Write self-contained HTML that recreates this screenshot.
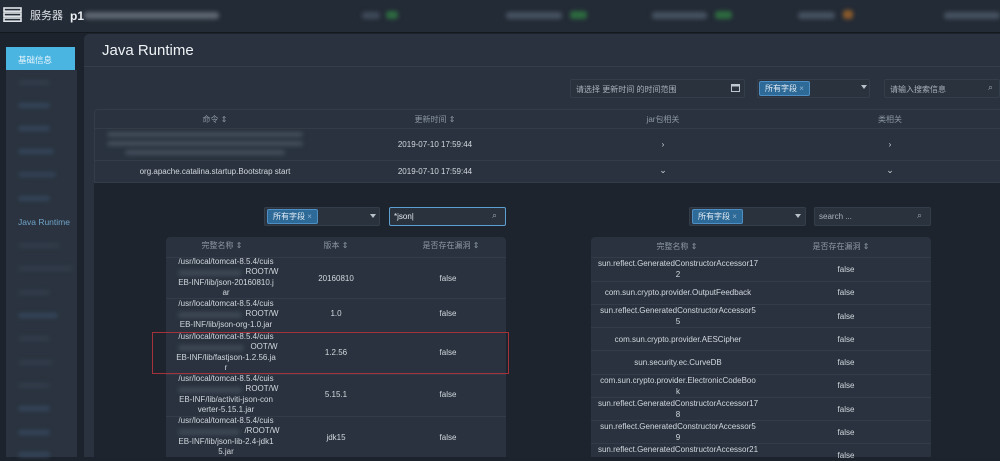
<!DOCTYPE html>
<html><head><meta charset="utf-8"><style>
*{box-sizing:border-box;margin:0;padding:0}
body{width:1000px;height:457px;overflow:hidden;background:#1d232c;font-family:"Liberation Sans","Noto Sans CJK SC",sans-serif;color:#d0d6de;position:relative}
.abs{position:absolute}
.blur{position:absolute;filter:blur(2px);border-radius:3px}
.c{position:absolute;text-align:center;font-size:8px;line-height:11px;color:#d3d8df}
.lt .c{line-height:10.3px}
.tag{position:absolute;background:#2e6a98;border:1px solid #4d8fc4;border-radius:2px;color:#e6eef5;font-size:8px;line-height:13px;padding:0 5px}
.inp{position:absolute;background:#2a323e;border:1px solid #343d4a;border-radius:2px;font-size:8px;color:#a9b2bd}
.hd{font-size:8px;color:#8e98a4}
.row{position:absolute;left:0;right:0;border-top:1px solid #333c48}
</style></head><body>
<!-- top bar -->
<div class="abs" style="left:0;top:0;width:1000px;height:33px;background:#232b36;border-bottom:1px solid #141920"></div>
<svg class="abs" style="left:3px;top:7px" width="19" height="15"><g fill="none" stroke="#e0e4e8" stroke-width="1.6"><rect x="1" y="1" width="17" height="3.2"/><rect x="1" y="6" width="17" height="3.2"/><rect x="1" y="11" width="17" height="3.2"/></g></svg>
<div class="abs" style="left:30px;top:9px;font-size:11px;line-height:14px;color:#dfe3e8">服务器</div>
<div class="abs" style="left:70px;top:9px;font-size:12px;line-height:14px;color:#eef1f4;font-weight:bold">p1</div>
<div class="blur" style="left:84px;top:12px;width:135px;height:7px;background:#5d6671"></div>
<div class="blur" style="left:362px;top:12px;width:18px;height:7px;background:#3e4958"></div>
<div class="blur" style="left:386px;top:11px;width:12px;height:8px;background:#2d6a3f"></div>
<div class="blur" style="left:506px;top:12px;width:56px;height:7px;background:#465160"></div>
<div class="blur" style="left:570px;top:11px;width:17px;height:8px;background:#2d6a3f"></div>
<div class="blur" style="left:652px;top:12px;width:55px;height:7px;background:#465160"></div>
<div class="blur" style="left:715px;top:11px;width:17px;height:8px;background:#2d6a3f"></div>
<div class="blur" style="left:798px;top:12px;width:37px;height:7px;background:#465160"></div>
<div class="blur" style="left:843px;top:10px;width:10px;height:9px;background:#8a5a2a"></div>
<div class="blur" style="left:944px;top:12px;width:56px;height:7px;background:#465160"></div>
<!-- sidebar -->
<div class="abs" style="left:6px;top:70px;width:71px;height:387px;background:#2a333f"></div>
<div class="abs" style="left:6px;top:47px;width:69px;height:23px;background:#4bb5e2;font-size:8.5px;color:#eaf6fc;padding:7px 0 0 12px">基础信息</div>
<div class="blur" style="left:18px;top:80px;width:32px;height:5px;background:#323c4a"></div>
<div class="blur" style="left:18px;top:103px;width:32px;height:5px;background:#34455a"></div>
<div class="blur" style="left:18px;top:126px;width:32px;height:5px;background:#34455a"></div>
<div class="blur" style="left:18px;top:149px;width:36px;height:5px;background:#34455a"></div>
<div class="blur" style="left:18px;top:172px;width:38px;height:5px;background:#324256"></div>
<div class="blur" style="left:18px;top:196px;width:32px;height:5px;background:#34455a"></div>
<div class="abs" style="left:18px;top:217px;font-size:8.5px;color:#6fa3c8">Java Runtime</div>
<div class="blur" style="left:18px;top:243px;width:42px;height:5px;background:#323c4a"></div>
<div class="blur" style="left:18px;top:266px;width:55px;height:5px;background:#323c4a"></div>
<div class="blur" style="left:18px;top:290px;width:32px;height:5px;background:#323c4a"></div>
<div class="blur" style="left:18px;top:313px;width:40px;height:5px;background:#34455a"></div>
<div class="blur" style="left:18px;top:336px;width:32px;height:5px;background:#323c4a"></div>
<div class="blur" style="left:18px;top:360px;width:35px;height:5px;background:#323c4a"></div>
<div class="blur" style="left:18px;top:383px;width:32px;height:5px;background:#323c4a"></div>
<div class="blur" style="left:18px;top:406px;width:32px;height:5px;background:#34455a"></div>
<div class="blur" style="left:18px;top:430px;width:32px;height:5px;background:#34455a"></div>
<div class="blur" style="left:18px;top:452px;width:32px;height:5px;background:#34455a"></div>
<!-- main panel -->
<div class="abs" style="left:84px;top:34px;width:916px;height:423px;background:#29323e;border-radius:5px 0 0 0"></div>
<div class="abs" style="left:102px;top:42px;font-size:15px;color:#f0f3f6">Java Runtime</div>
<div class="abs" style="left:84px;top:66px;width:916px;height:1px;background:#343e4b"></div>
<!-- filters -->
<div class="inp" style="left:570px;top:79px;width:175px;height:19px;padding:4px 5px">请选择 更新时间 的时间范围</div>
<svg class="abs" style="left:731px;top:84px" width="9" height="8"><rect x=".5" y=".5" width="8" height="7" fill="none" stroke="#c0c6cd"/><rect x=".5" y=".5" width="8" height="2" fill="#c0c6cd"/></svg>
<div class="inp" style="left:757px;top:79px;width:113px;height:19px"></div>
<div class="tag" style="left:759px;top:81px">所有字段 <span style="color:#8fb3d0">×</span></div>
<div class="abs" style="left:861px;top:85px;border:3px solid transparent;border-top:4px solid #b8c0c8"></div>
<div class="inp" style="left:884px;top:79px;width:116px;height:19px;padding:4px 5px">请输入搜索信息</div>
<div class="abs" style="left:988px;top:82px;font-size:9px;color:#9aa3ad">⌕</div>
<!-- table 1 -->
<div class="abs" style="left:94px;top:109px;width:906px;height:74px;border:1px solid #333c48;border-right:0;border-radius:4px 0 0 0">
 <div class="c hd" style="left:100px;width:40px;top:4px">命令 ⇕</div>
 <div class="c hd" style="left:300px;width:80px;top:4px">更新时间 ⇕</div>
 <div class="c hd" style="left:528px;width:80px;top:4px">jar包相关</div>
 <div class="c hd" style="left:755px;width:80px;top:4px">类相关</div>
 <div class="row" style="top:18px"></div>
 <div class="row" style="top:50px"></div>
 <div class="blur" style="left:12px;top:22px;width:196px;height:5px;background:#434d5b"></div>
 <div class="blur" style="left:12px;top:31px;width:196px;height:5px;background:#434d5b"></div>
 <div class="blur" style="left:30px;top:40px;width:160px;height:5px;background:#434d5b"></div>
 <div class="c" style="left:270px;width:140px;top:29px">2019-07-10 17:59:44</div>
 <div class="c" style="left:270px;width:140px;top:56px">2019-07-10 17:59:44</div>
 <div class="c" style="left:12px;width:216px;top:56px">org.apache.catalina.startup.Bootstrap start</div>
 <div class="c" style="left:558px;width:20px;top:29px">›</div>
 <div class="c" style="left:785px;width:20px;top:29px">›</div>
 <div class="c" style="left:558px;width:20px;top:55px;font-size:9px">⌄</div>
 <div class="c" style="left:785px;width:20px;top:55px;font-size:9px">⌄</div>
</div>
<!-- lower region -->
<div class="abs" style="left:94px;top:183px;width:906px;height:274px;background:#1e242e"></div>
<div class="inp" style="left:264px;top:207px;width:116px;height:19px"></div>
<div class="tag" style="left:267px;top:209px">所有字段 <span style="color:#8fb3d0">×</span></div>
<div class="abs" style="left:370px;top:214px;border:3px solid transparent;border-top:4px solid #b8c0c8"></div>
<div class="inp" style="left:389px;top:207px;width:117px;height:19px;border-color:#5c9fd3;color:#e5e9ee;padding:4px 4px">*json|</div>
<div class="abs" style="left:492px;top:210px;font-size:9px;color:#9aa3ad">⌕</div>
<div class="inp" style="left:689px;top:207px;width:117px;height:19px"></div>
<div class="tag" style="left:692px;top:209px">所有字段 <span style="color:#8fb3d0">×</span></div>
<div class="abs" style="left:795px;top:214px;border:3px solid transparent;border-top:4px solid #b8c0c8"></div>
<div class="inp" style="left:814px;top:207px;width:117px;height:19px;padding:4px 4px">search ...</div>
<div class="abs" style="left:917px;top:210px;font-size:9px;color:#9aa3ad">⌕</div>
<!-- left table -->
<div class="abs lt" style="left:166px;top:237px;width:340px;height:220px;background:#29323e;border-radius:4px 4px 0 0">
 <div class="c hd" style="left:0;width:112px;top:4px">完整名称 ⇕</div>
 <div class="c hd" style="left:140px;width:60px;top:4px">版本 ⇕</div>
 <div class="c hd" style="left:230px;width:110px;top:4px">是否存在漏洞 ⇕</div>
 <div class="row" style="top:20px"></div><div class="row" style="top:61px"></div><div class="row" style="top:95px"></div><div class="row" style="top:137px"></div><div class="row" style="top:179px"></div>
 <div class="c" style="left:4px;width:112px;top:20px">/usr/local/tomcat-8.5.4/cuis<br>&nbsp;<br>EB-INF/lib/json-20160810.j<br>ar</div>
 <div class="c" style="left:4px;width:112px;top:62px">/usr/local/tomcat-8.5.4/cuis<br>&nbsp;<br>EB-INF/lib/json-org-1.0.jar</div>
 <div class="c" style="left:4px;width:112px;top:95px">/usr/local/tomcat-8.5.4/cuis<br>&nbsp;<br>EB-INF/lib/fastjson-1.2.56.ja<br>r</div>
 <div class="c" style="left:4px;width:112px;top:137px">/usr/local/tomcat-8.5.4/cuis<br>&nbsp;<br>EB-INF/lib/activiti-json-con<br>verter-5.15.1.jar</div>
 <div class="c" style="left:4px;width:112px;top:179px">/usr/local/tomcat-8.5.4/cuis<br>&nbsp;<br>EB-INF/lib/json-lib-2.4-jdk1<br>5.jar</div>
 <div class="c" style="left:76px;width:40px;top:30px">ROOT/W</div><div class="blur" style="left:12px;top:33px;width:64px;height:6px;background:#3e4855"></div>
 <div class="c" style="left:76px;width:40px;top:72px">ROOT/W</div><div class="blur" style="left:12px;top:75px;width:64px;height:6px;background:#3e4855"></div>
 <div class="c" style="left:78px;width:40px;top:105px">OOT/W</div><div class="blur" style="left:12px;top:108px;width:66px;height:6px;background:#3e4855"></div>
 <div class="c" style="left:76px;width:40px;top:147px">ROOT/W</div><div class="blur" style="left:12px;top:150px;width:64px;height:6px;background:#3e4855"></div>
 <div class="c" style="left:76px;width:40px;top:189px">/ROOT/W</div><div class="blur" style="left:12px;top:192px;width:62px;height:6px;background:#3e4855"></div>
 <div class="c" style="left:140px;width:60px;top:37px">20160810</div><div class="c" style="left:250px;width:64px;top:37px">false</div>
 <div class="c" style="left:140px;width:60px;top:72px">1.0</div><div class="c" style="left:250px;width:64px;top:72px">false</div>
 <div class="c" style="left:140px;width:60px;top:111px">1.2.56</div><div class="c" style="left:250px;width:64px;top:111px">false</div>
 <div class="c" style="left:140px;width:60px;top:153px">5.15.1</div><div class="c" style="left:250px;width:64px;top:153px">false</div>
 <div class="c" style="left:140px;width:60px;top:196px">jdk15</div><div class="c" style="left:250px;width:64px;top:196px">false</div>
</div>
<div class="abs" style="left:152px;top:332px;width:357px;height:42px;border:1px solid #a3323a"></div>
<!-- right table -->
<div class="abs" style="left:591px;top:237px;width:340px;height:220px;background:#29323e;border-radius:4px 4px 0 0">
 <div class="c hd" style="left:30px;width:112px;top:4px">完整名称 ⇕</div>
 <div class="c hd" style="left:195px;width:110px;top:4px">是否存在漏洞 ⇕</div>
 <div class="row" style="top:20px"></div><div class="row" style="top:44px"></div><div class="row" style="top:67px"></div><div class="row" style="top:90px"></div><div class="row" style="top:113px"></div><div class="row" style="top:137px"></div><div class="row" style="top:160px"></div><div class="row" style="top:183px"></div><div class="row" style="top:206px"></div>
 <div class="c" style="left:2px;width:170px;top:21px">sun.reflect.GeneratedConstructorAccessor17<br>2</div>
 <div class="c" style="left:2px;width:170px;top:50px">com.sun.crypto.provider.OutputFeedback</div>
 <div class="c" style="left:2px;width:170px;top:68px">sun.reflect.GeneratedConstructorAccessor5<br>5</div>
 <div class="c" style="left:2px;width:170px;top:97px">com.sun.crypto.provider.AESCipher</div>
 <div class="c" style="left:2px;width:170px;top:120px">sun.security.ec.CurveDB</div>
 <div class="c" style="left:2px;width:170px;top:138px">com.sun.crypto.provider.ElectronicCodeBoo<br>k</div>
 <div class="c" style="left:2px;width:170px;top:161px">sun.reflect.GeneratedConstructorAccessor17<br>8</div>
 <div class="c" style="left:2px;width:170px;top:184px">sun.reflect.GeneratedConstructorAccessor5<br>9</div>
 <div class="c" style="left:2px;width:170px;top:207px">sun.reflect.GeneratedConstructorAccessor21</div>
 <div class="c" style="left:230px;width:50px;top:27px">false</div>
 <div class="c" style="left:230px;width:50px;top:50px">false</div>
 <div class="c" style="left:230px;width:50px;top:74px">false</div>
 <div class="c" style="left:230px;width:50px;top:97px">false</div>
 <div class="c" style="left:230px;width:50px;top:120px">false</div>
 <div class="c" style="left:230px;width:50px;top:143px">false</div>
 <div class="c" style="left:230px;width:50px;top:167px">false</div>
 <div class="c" style="left:230px;width:50px;top:190px">false</div>
 <div class="c" style="left:230px;width:50px;top:213px">false</div>
</div>
</body></html>
